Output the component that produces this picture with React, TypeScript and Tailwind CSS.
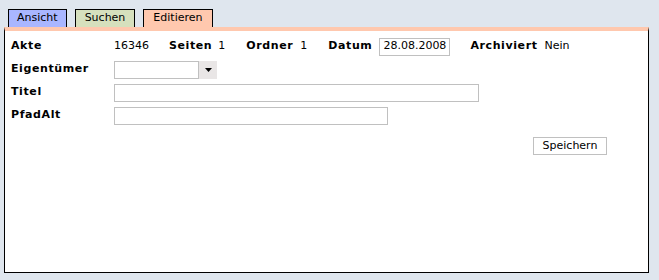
import React from 'react'

const font = "font-['DejaVu_Sans','Liberation_Sans',sans-serif]"

function Label({ children, className = '' }: { children: React.ReactNode, className?: string }) {
    return <span className={`font-bold tracking-[0.6px] ${className}`}>{children}</span>
}

export default function App() {
    return (
        <div className={`w-[659px] h-[280px] bg-[#dfe6ee] ${font} text-[11px] text-black pt-[9px] overflow-hidden`}>
            {/* Tabs */}
            <div className="flex gap-[8px] ml-[8px] h-[18px] items-end">
                <div className="h-[18px] px-[8px] flex items-center border border-b-0 border-black bg-[#a9b6ff]">Ansicht</div>
                <div className="h-[18px] px-[9px] flex items-center border border-b-0 border-black bg-[#d6e0bd]">Suchen</div>
                <div className="h-[18px] px-[9px] flex items-center border border-b-0 border-black bg-[#ffc8ae]">Editieren</div>
            </div>

            {/* Panel */}
            <div className="ml-[4px] w-[645px] h-[246px] bg-white border-t-[4px] border-t-[#ffc8ae] border-x border-b border-x-black border-b-black">
                <div className="pl-[6px] pt-[4px]">
                    {/* Row 1 */}
                    <div className="flex items-center h-[23px]">
                        <Label className="w-[103px]">Akte</Label>
                        <span className="w-[55px]">16346</span>
                        <Label className="mr-[6px]">Seiten</Label>
                        <span className="w-[28px]">1</span>
                        <Label className="mr-[7px]">Ordner</Label>
                        <span className="w-[28px]">1</span>
                        <Label className="mr-[7px]">Datum</Label>
                        <div className="w-[71px] h-[18px] border border-[#c0c0c0] flex items-center px-[3px] mr-[20px]">28.08.2008</div>
                        <Label className="mr-[7px]">Archiviert</Label>
                        <span>Nein</span>
                    </div>

                    {/* Row 2 */}
                    <div className="flex items-center h-[23px]">
                        <Label className="w-[103px]">Eigentümer</Label>
                        <div className="flex h-[18px]">
                            <div className="w-[85px] h-[18px] border border-[#c0c0c0]" />
                            <div className="w-[18px] h-[18px] bg-[#e9e6e6] flex items-center justify-center">
                                <svg width="7" height="4" viewBox="0 0 7 4">
                                    <path d="M0 0h7L3.5 4z" fill="#000" />
                                </svg>
                            </div>
                        </div>
                    </div>

                    {/* Row 3 */}
                    <div className="flex items-center h-[23px]">
                        <Label className="w-[103px]">Titel</Label>
                        <div className="w-[365px] h-[18px] border border-[#c0c0c0]" />
                    </div>

                    {/* Row 4 */}
                    <div className="flex items-center h-[23px]">
                        <Label className="w-[103px]">PfadAlt</Label>
                        <div className="w-[274px] h-[18px] border border-[#c0c0c0]" />
                    </div>

                    <div className="flex justify-end pr-[41px] mt-[10px]">
                        <button className="w-[74px] h-[18px] border border-[#c0c0c0] bg-white flex items-center justify-center">Speichern</button>
                    </div>
                </div>
            </div>
        </div>
    )
}
